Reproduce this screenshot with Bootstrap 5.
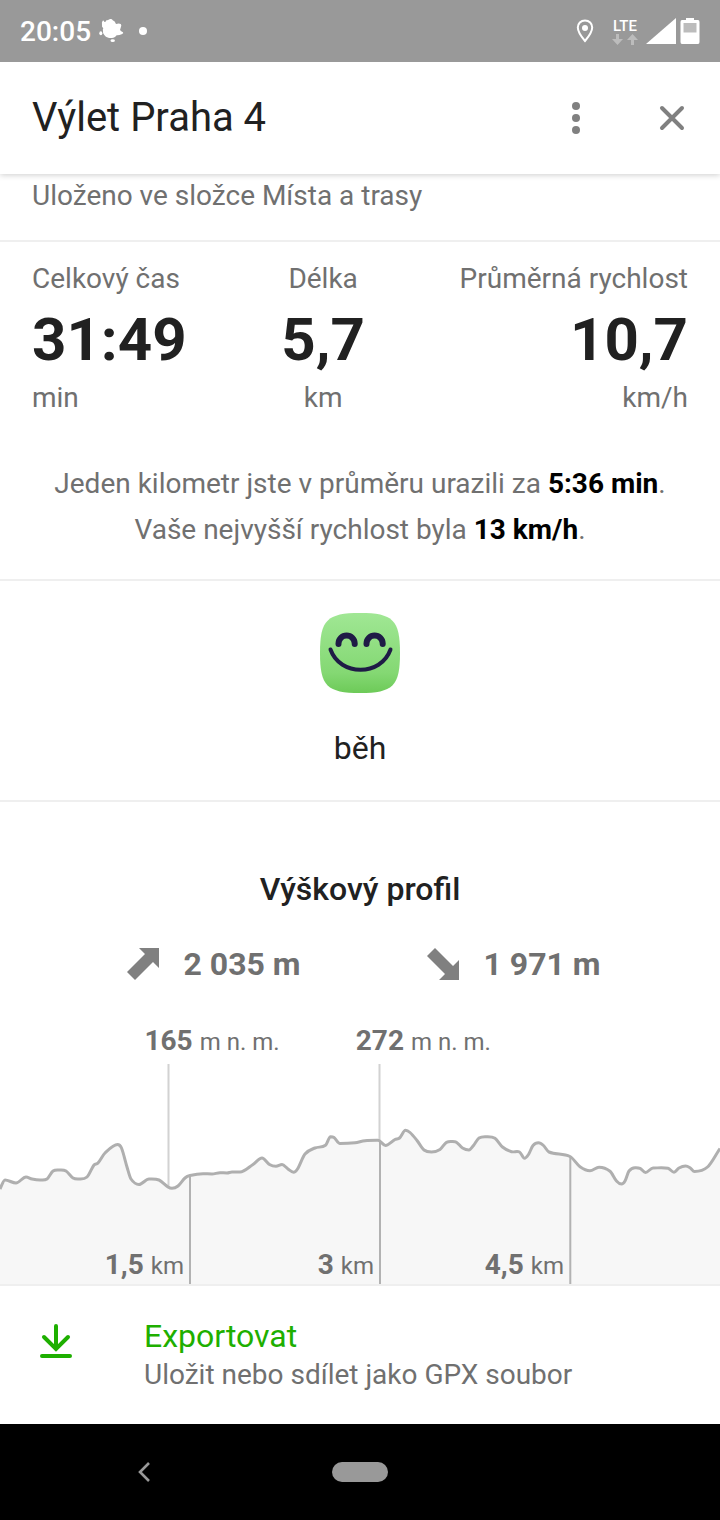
<!DOCTYPE html>
<html lang="cs">
<head>
<meta charset="utf-8">
<meta name="viewport" content="width=device-width, initial-scale=1">
<title>Výlet Praha 4</title>
<link rel="stylesheet" href="https://cdn.jsdelivr.net/npm/bootstrap@5.3.0/dist/css/bootstrap.min.css">
<style>
  body { font-family: Roboto, "Noto Sans", sans-serif; font-size: 28px; line-height: 32px; color: #707070; background: #fff; }
  .ink { color: #212121; }
  .status-bar { height: 62px; background: #999; color: #fff; padding: 0 20px; position: relative; z-index: 3; }
  .clock { font-weight: 500; padding-top: 2px; }
  .lte-label { font-size: 15px; line-height: 16px; font-weight: 500; }
  .network { margin: 0 8px 0 18px; }
  .app-bar { height: 112px; padding: 0 32px; background: #fff; box-shadow: 0 1px 6px rgba(0,0,0,.2); z-index: 2; }
  .app-title { font-size: 40px; line-height: 48px; }
  .icon-btn { background: none; border: 0; padding: 0; line-height: 0; color: #808080; }
  .rule { border-bottom: 2px solid #efefef; }
  .folder { padding: 6px 32px 28px; }
  .stats { padding: 21px 32px 32px; }
  .stat-value { font-size: 60px; line-height: 64px; font-weight: 700; margin: 13px 0 10px; }
  .summary { line-height: 46px; padding: 15px 0 26px; }
  .summary strong { color: #000; font-weight: 700; }
  .activity { padding: 32px 0 32px; }
  .activity-name { font-size: 32px; line-height: 40px; margin-top: 35px; }
  .profile-title { font-size: 32px; line-height: 40px; font-weight: 500; padding-top: 67px; }
  .climbs { padding: 35px 56px 0 64px; font-size: 32px; line-height: 40px; font-weight: 700; }
  .altitudes { height: 80px; }
  .altitude { top: 41px; transform: translateX(-24px); white-space: nowrap; }
  .unit { font-size: 24px; font-weight: 400; }
  .chart { height: 220px; }
  .km-row { padding-bottom: 2px; }
  .km-cell { width: 26.39%; padding-right: 6px; }
  .export { padding: 30px 32px 30px 40px; color: #707070; text-decoration: none; min-height: 138px; }
  .export:hover { color: #707070; }
  .export-text { margin-left: 72px; }
  .export-title { font-size: 32px; line-height: 40px; margin-bottom: 3px; color: #1eaf00; }
  .system-nav { height: 96px; background: #000; }
  .back-zone { padding-right: 44px; }
  .free-zone { padding-left: 44px; }
  .back-btn { color: #999; }
  .home-pill { width: 56px; height: 20px; border-radius: 10px; background: #999; border: 0; padding: 0; }
</style>
</head>
<body>
<div class="min-vh-100 d-flex flex-column">

  <div class="status-bar d-flex align-items-center">
    <span class="clock">20:05</span>
    <svg class="ms-2" width="26" height="26" viewBox="99 18 26 26" fill="#fff" aria-hidden="true">
      <path d="M102.700 20.700Q103.500 20 104.500 22Q105.500 22.500 106.700 20Q108 20.500 110 19Q112 18.500 112.700 20.300Q115 21 116 24Q119 23 120.700 24Q121.800 25 121 26.700L120 30Q121 31.500 123 32.300Q124 33.500 121.700 34.300Q119 35.500 116.700 35.300Q115 37.500 113.300 37.700Q110.500 38.500 108.300 37.700Q105.500 37 104.300 35Q102.500 33 103 31Q102.500 29.500 103.300 28.300Q101.500 27 102 25Q101.500 22 102.700 20.700Z"/>
      <ellipse cx="100.800" cy="33.300" rx="1.500" ry="2"/><ellipse cx="112.700" cy="40.700" rx="2.200" ry="1.400"/>
    </svg>
    <svg class="ms-3" width="8" height="8" viewBox="2 0 8 8" fill="#fff" overflow="visible" aria-hidden="true"><circle cx="4" cy="4" r="4"/></svg>
    <div class="ms-auto d-flex align-items-center">
      <svg width="18" height="24" viewBox="0 0 18 24" aria-hidden="true"><path d="M9 1.500C4.800 1.500 1.800 4.500 1.800 8.500C1.800 13.500 9 22 9 22S16.200 13.500 16.200 8.500C16.200 4.500 13.200 1.500 9 1.500Z" fill="none" stroke="#fff" stroke-width="2"/><circle cx="9" cy="9" r="3" fill="#fff"/></svg>
      <div class="network d-flex flex-column align-items-center">
        <span class="lte-label">LTE</span>
        <svg width="26" height="11" viewBox="0 0 26 11" fill="#bcbcbc" aria-hidden="true"><path d="M4 0h3v5h4L5.500 11 0 5h4ZM19 11h3V6h4L20.500 0 15 6h4Z"/></svg>
      </div>
      <svg width="30" height="26" viewBox="0 0 30 26" fill="#fff" aria-hidden="true"><path d="M30 0V26H0Z"/></svg>
      <svg class="ms-1" width="20" height="26" viewBox="0 0 20 26" aria-hidden="true"><path d="M2 2H6V0H14V2H18Q19.500 2 19.500 4V24Q19.500 26 18 26H2Q.500 26 .500 24V4Q.500 2 2 2Z" fill="#fff"/><path d="M3.500 5H16.500V14.500H3.500Z" fill="#bcbcbc"/></svg>
    </div>
  </div>

  <header class="app-bar d-flex align-items-center position-relative">
    <h1 class="app-title ink fw-normal mb-0 me-auto">Výlet Praha 4</h1>
    <button class="icon-btn me-5" type="button" aria-label="Další možnosti">
      <svg width="64" height="32" viewBox="0 0 64 32" fill="currentColor"><circle cx="32" cy="4" r="4"/><circle cx="32" cy="16" r="4"/><circle cx="32" cy="28" r="4"/></svg>
    </button>
    <button class="icon-btn" type="button" aria-label="Zavřít">
      <svg width="32" height="32" viewBox="0 0 32 32" fill="none" stroke="currentColor" stroke-width="4" stroke-linecap="round"><path d="M6 6L26 26M26 6L6 26"/></svg>
    </button>
  </header>

  <main class="flex-grow-1">
    <div class="folder rule">Uloženo ve složce Místa a trasy</div>

    <section class="rule">
      <div class="stats d-flex justify-content-between">
        <div>Celkový čas<div class="stat-value ink">31:49</div>min</div>
        <div class="text-center">Délka<div class="stat-value ink">5,7</div>km</div>
        <div class="text-end">Průměrná rychlost<div class="stat-value ink">10,7</div>km/h</div>
      </div>
      <p class="summary text-center mb-0">Jeden kilometr jste v průměru urazili za <strong>5:36 min</strong>.<br>Vaše nejvyšší rychlost byla <strong>13 km/h</strong>.</p>
    </section>

    <section class="activity rule text-center">
      <svg class="d-block mx-auto" width="80" height="80" viewBox="0 0 80 80" role="img" aria-label="Úsměv">
        <defs><linearGradient id="face" x1="0" y1="0" x2="0" y2="1"><stop offset="0" stop-color="#a0e794"/><stop offset=".75" stop-color="#84d873"/><stop offset="1" stop-color="#6dca58"/></linearGradient></defs>
        <path d="M40 0C73 0 80 7 80 40C80 73 73 80 40 80C7 80 0 73 0 40C0 7 7 0 40 0Z" fill="url(#face)"/>
        <g fill="none" stroke="#1f1b46" stroke-linecap="round"><path d="M18.500 31V30.500A8.100 8.100 0 0 1 34.700 30.500V31M46.500 31V30.500A8.100 8.100 0 0 1 62.700 30.500V31" stroke-width="6"/><path d="M10.500 36.500C20 63.500 61 63.500 70.500 36.500" stroke-width="4"/></g>
      </svg>
      <div class="activity-name ink">běh</div>
    </section>

    <section class="rule">
      <h2 class="profile-title ink text-center mb-0">Výškový profil</h2>
      <div class="climbs d-flex">
        <div class="w-50 d-flex align-items-center justify-content-center gap-4">
          <svg width="32" height="32" viewBox="0 0 32 32" fill="#808080" aria-hidden="true"><path d="M12 0H32V20L26 14L8 32L0 24L18 6Z"/></svg>
          <span>2 035 m</span>
        </div>
        <div class="w-50 d-flex align-items-center justify-content-center gap-4">
          <svg width="32" height="32" viewBox="0 0 32 32" fill="#808080" aria-hidden="true"><path d="M8 0L26 18L32 12V32H12L18 26L0 8Z"/></svg>
          <span>1 971 m</span>
        </div>
      </div>
      <div class="altitudes position-relative">
        <div class="altitude position-absolute" style="left:23.400%"><b>165</b> <span class="unit">m n. m.</span></div>
        <div class="altitude position-absolute" style="left:52.750%"><b>272</b> <span class="unit">m n. m.</span></div>
      </div>
      <div class="chart position-relative d-flex flex-column justify-content-end">
        <svg class="position-absolute top-0 start-0 w-100 h-100" viewBox="0 0 720 220" preserveAspectRatio="none" aria-hidden="true">
          <path id="area" fill="#f7f7f7"/>
          <path d="M168.500 0V123M379.500 0V76" stroke="#d2d2d2" stroke-width="2"/>
          <path d="M190 112V220M380 76V220M570.300 93V220" stroke="#b2b2b2" stroke-width="2"/>
          <path id="ridge" fill="none" stroke="#afafaf" stroke-width="3"/>
        </svg>
        <div class="km-row d-flex position-relative">
          <div class="km-cell text-end"><b>1,5</b> <span class="unit">km</span></div>
          <div class="km-cell text-end"><b>3</b> <span class="unit">km</span></div>
          <div class="km-cell text-end"><b>4,5</b> <span class="unit">km</span></div>
        </div>
      </div>
    </section>

    <a class="export d-flex" href="#export">
      <svg class="mt-1" width="32" height="40" viewBox="0 0 32 40" fill="none" stroke="#1eaf00" stroke-width="4" stroke-linecap="round" aria-hidden="true"><path d="M16 6V29M4 17L16 29L28 17M2 36H30"/></svg>
      <span class="export-text"><span class="export-title d-block">Exportovat</span>Uložit nebo sdílet jako GPX soubor</span>
    </a>
  </main>

  <nav class="system-nav d-flex align-items-center">
    <div class="back-zone w-50 d-flex justify-content-center">
      <button class="icon-btn back-btn" type="button" aria-label="Zpět"><svg width="14" height="20" viewBox="0 0 14 20" fill="none" stroke="currentColor" stroke-width="2.600"><path d="M12 1L3 10L12 19"/></svg></button>
    </div>
    <button class="home-pill flex-shrink-0" type="button" aria-label="Domů"></button>
    <div class="free-zone w-50"></div>
  </nav>
</div>

<script src="https://cdn.jsdelivr.net/npm/bootstrap@5.3.0/dist/js/bootstrap.bundle.min.js"></script>
<script>
  // Elevation samples: distance along the chart, depth below its top edge
  const p = [[0,125],[5,116],[16,119],[26,113],[32,115],[40,116],[47,115],[53,107],[60,106],[66,107],[73,114],[79,115],[87,113],[94,101],[98,99],[105,89],[117.5,80.5],[121.5,84],[127,103],[131,115],[139,120.5],[149,115],[159,116],[168,123],[172,124.3],[178,122],[185,114],[190,111.5],[203,109.7],[212,110],[220,108.7],[227,109],[232,108],[240,108],[253,100.5],[262,94],[269.5,100.5],[276,102.3],[282,100.5],[288,105],[293.5,108.2],[297.5,105],[305,90],[315,84],[325.5,81.3],[330.5,72.7],[334,73.5],[340,79.5],[355,78.7],[365,76.7],[378,76.3],[385.5,81.5],[395,75.5],[399.5,74],[405.5,66.3],[410,68.5],[417,76.5],[424,86],[431.5,88],[440,85.5],[446.5,78.3],[455,77.7],[462.5,84],[469,86],[473.5,81.5],[479,74],[487,72.7],[495,74.3],[502.5,83],[511.5,87.7],[519.5,88],[524.5,94.3],[528.5,90.5],[533,81.5],[538.5,78.7],[543.5,81.5],[549,88],[570,92.5],[580,102.7],[590,106.7],[599,103.3],[610,107.3],[616.5,117],[621.5,120],[625,117],[629,107],[635,103.7],[640,104.3],[645.5,108.5],[653,104],[668,104.3],[674,108.3],[679,104],[685.5,102],[690,103.7],[694.5,107.5],[707.5,103],[720,84.5]];
  // Slopes averaged over both neighbours, flattened at peaks and dips
  const slope = p.map((q, i) => {
    if (i === 0 || i === p.length - 1) return 0;
    const a = (q[1] - p[i-1][1]) / (q[0] - p[i-1][0]);
    const b = (p[i+1][1] - q[1]) / (p[i+1][0] - q[0]);
    return a * b <= 0 ? 0 : (p[i+1][1] - p[i-1][1]) / (p[i+1][0] - p[i-1][0]);
  });
  slope[0] = -2;
  slope[p.length - 1] = -1.4;
  let d = 'M' + p[0];
  for (let i = 1; i < p.length; i++) {
    const h = (p[i][0] - p[i-1][0]) / 3;
    d += `C${p[i-1][0] + h},${p[i-1][1] + slope[i-1] * h} ${p[i][0] - h},${p[i][1] - slope[i] * h} ${p[i]}`;
  }
  document.getElementById('ridge').setAttribute('d', d);
  document.getElementById('area').setAttribute('d', d + 'V220H0Z');
</script>
</body>
</html>
